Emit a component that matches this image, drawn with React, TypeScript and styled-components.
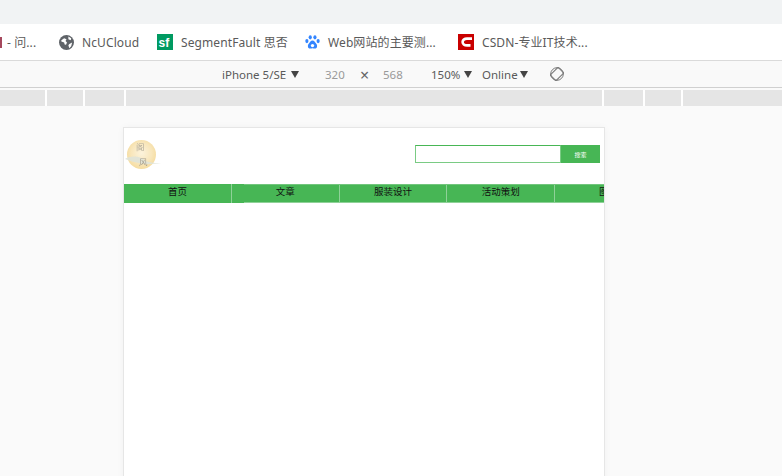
import React from 'react'
import styled, { createGlobalStyle } from 'styled-components'

const GlobalStyle = createGlobalStyle`
  html, body {
    margin: 0;
    padding: 0;
    height: 100%;
    overflow: hidden;
    background: #fafafa;
    font-family: "Liberation Sans", "Noto Sans CJK SC", sans-serif;
  }
`

const Page = styled.div`
  width: 782px;
  height: 476px;
  display: flex;
  flex-direction: column;
  overflow: hidden;
`

const TabStrip = styled.div`
  flex: none;
  height: 24px;
  background: #f1f3f4;
`

const BookmarkBar = styled.div`
  flex: none;
  height: 36px;
  background: #fff;
  border-bottom: 1px solid #dadada;
  display: flex;
  align-items: center;
  overflow: hidden;
  font-family: "Noto Sans", "Noto Sans CJK SC", sans-serif;
  font-size: 12px;
  letter-spacing: 0.1px;
  color: #5a5a5a;
`

const Bookmark = styled.div<{ $width: number }>`
  flex: none;
  width: ${p => p.$width}px;
  display: flex;
  align-items: center;
  gap: 8px;
  white-space: nowrap;
`

const CutIconEdge = styled.span`
  flex: none;
  width: 2px;
  height: 11px;
  margin-right: -3px;
  background: #a5475c;
`

const DeviceBar = styled.div`
  flex: none;
  height: 26px;
  background: #f9f9f9;
  border-bottom: 1px solid #d0d0d0;
  display: flex;
  align-items: center;
  padding-left: 222px;
  font-family: "Noto Sans", sans-serif;
  font-size: 11.5px;
  color: #5a5a5a;
`

const DeviceItem = styled.span<{ $width: number; $muted?: boolean }>`
  flex: none;
  width: ${p => p.$width}px;
  color: ${p => (p.$muted ? '#9a9a9a' : '#5a5a5a')};
  white-space: nowrap;
`

const Times = styled.span`
  flex: none;
  width: 23px;
  font-size: 16px;
  line-height: 16px;
  padding-top: 2px;
  color: #666;
`

const Caret = styled.span<{ $gap?: number }>`
  display: inline-block;
  margin-left: ${p => p.$gap ?? 5}px;
  width: 0;
  height: 0;
  border-left: 4px solid transparent;
  border-right: 4px solid transparent;
  border-top: 7px solid #444;
  vertical-align: 1px;
`

const Ruler = styled.div`
  flex: none;
  margin-top: 2px;
  height: 16px;
  display: flex;
  gap: 2px;
  background: #fff;
`

const RulerPart = styled.div<{ $width: number }>`
  flex: none;
  width: ${p => p.$width}px;
  background: #e5e5e5;
`

const Viewport = styled.div`
  flex: 1;
  min-height: 0;
  overflow: hidden;
  padding: 22px 0 0 124px;
`

const Device = styled.div`
  width: 480px;
  height: 400px;
  background: #fff;
  box-shadow: 0 0 0 1px #e6e6e6, 0 0 8px rgba(0, 0, 0, 0.05);
  overflow: hidden;
`

const Header = styled.div`
  height: 56px;
  display: flex;
  align-items: center;
  justify-content: space-between;
  padding-right: 4px;
`

const LogoMark = styled.svg`
  display: block;
  margin-bottom: 3px;
  filter: blur(0.5px);
`

const Search = styled.div`
  display: flex;
  height: 18px;
  margin-bottom: 4px;
`

const SearchInput = styled.div`
  width: 146px;
  box-sizing: border-box;
  border: 1px solid #7acb84;
  border-top-color: #47b655;
  background: #fff;
`

const SearchButton = styled.div`
  width: 39px;
  background: #47b655;
  color: #fff;
  font-size: 6px;
  display: flex;
  align-items: center;
  justify-content: center;
`

const Nav = styled.div`
  position: relative;
  display: flex;
  height: 19px;
  overflow: hidden;

  &::after {
    content: '';
    position: absolute;
    left: 120px;
    right: 0;
    top: 0;
    bottom: 0;
    border-top: 1px solid #72c67d;
    border-bottom: 1px solid #8fd198;
  }
`

const NavItem = styled.div`
  flex: none;
  width: 107.8px;
  box-sizing: border-box;
  height: 19px;
  background: #47b655;
  border-right: 1px solid #8fd198;
  text-align: center;
  font-size: 9.5px;
  line-height: 15px;
  color: #111;
`

const tabs = ['首页', '文章', '服装设计', '活动策划', '图片']

const GlobeIcon = () => (
  <svg width="15" height="15" viewBox="0 0 16 16">
    <circle cx="8" cy="8" r="8" fill="#5f6368" />
    <path d="M2.500 5.500l3-2 2.500 1-1 2 1.500 1.500-1 2.500-1.500-.5-.5-2-3-1zM10 1.500l3 2-.5 2-2.500-1zM11 9.500l3-1.500-1 4-2 2-1-3z" fill="#fff" />
  </svg>
)

const SfIcon = () => (
  <svg width="16" height="16" viewBox="0 0 16 16">
    <rect width="16" height="16" fill="#009a61" />
    <text x="1.5" y="12.5" fontFamily="Liberation Sans" fontWeight="700" fontSize="12" fill="#fff">sf</text>
  </svg>
)

const PawIcon = () => (
  <svg width="15" height="16" viewBox="0 0 16 16" fill="#3385ff">
    <ellipse cx="5.600" cy="3" rx="1.700" ry="2.300" />
    <ellipse cx="10.600" cy="3" rx="1.700" ry="2.300" />
    <ellipse cx="2" cy="7" rx="1.700" ry="2.200" />
    <ellipse cx="14" cy="7" rx="1.700" ry="2.200" />
    <path d="M8 6.500c-2 0-2.500 2-4 3.300C2.700 11 2.500 15 5.500 15c1 0 1.500-.4 2.500-.4s1.500.4 2.500.4c3 0 2.800-4 1.500-5.200C10.500 8.500 10 6.500 8 6.500z" />
    <circle cx="8" cy="11.800" r="1.800" fill="#fff" />
  </svg>
)

const CsdnIcon = () => (
  <svg width="16" height="16" viewBox="0 0 16 16">
    <rect width="16" height="16" fill="#c90000" />
    <path d="M14 4.600H9C6.300 4.600 4.600 6.200 4.600 8S6.300 11.400 9 11.400h3.500" fill="none" stroke="#fff" strokeWidth="2.600" />
  </svg>
)

const RotateIcon = () => (
  <svg width="14" height="14" viewBox="0 0 14 14" fill="none" stroke="#777" strokeWidth="1">
    <circle cx="7" cy="7" r="6.300" />
    <rect x="3" y="1.500" width="8" height="11" rx="0.500" transform="rotate(45 7 7)" />
  </svg>
)

const Logo = () => (
  <LogoMark width="38" height="31" viewBox="0 0 38 31">
    <defs>
      <radialGradient id="moon" cx="50%" cy="45%" r="55%">
        <stop offset="0%" stopColor="#fcf3dc" />
        <stop offset="65%" stopColor="#f8e6bb" />
        <stop offset="100%" stopColor="#f5dc9f" />
      </radialGradient>
    </defs>
    <circle cx="17.500" cy="15.500" r="14.500" fill="url(#moon)" />
    <path d="M1 20c5-3 11-3 16-1 3 1 5 4 8 4 4 1 8 1 12 1-8 1-16 2-22 0-5-1-9-2-14-4z" fill="#dfe3d8" opacity="0.9" />
    <text x="12" y="11" fontSize="8.500" fill="#b3ac9b">阁</text>
    <text x="15" y="26" fontSize="8.500" fill="#a9a291">风</text>
  </LogoMark>
)

export default function App() {
  return (
    <Page>
      <GlobalStyle />
      <TabStrip />
      <BookmarkBar>
        <Bookmark $width={59}>
          <CutIconEdge />
          <span>- 问...</span>
        </Bookmark>
        <Bookmark $width={98}>
          <GlobeIcon />
          NcUCloud
        </Bookmark>
        <Bookmark $width={148}>
          <SfIcon />
          SegmentFault 思否
        </Bookmark>
        <Bookmark $width={153}>
          <PawIcon />
          Web网站的主要测...
        </Bookmark>
        <Bookmark $width={160}>
          <CsdnIcon />
          CSDN-专业IT技术...
        </Bookmark>
      </BookmarkBar>
      <DeviceBar>
        <DeviceItem $width={103}>
          iPhone 5/SE
          <Caret />
        </DeviceItem>
        <DeviceItem $width={35} $muted>320</DeviceItem>
        <Times>×</Times>
        <DeviceItem $width={48} $muted>568</DeviceItem>
        <DeviceItem $width={51}>
          150%
          <Caret $gap={4} />
        </DeviceItem>
        <DeviceItem $width={68}>
          Online
          <Caret $gap={2} />
        </DeviceItem>
        <RotateIcon />
      </DeviceBar>
      <Ruler>
        <RulerPart $width={45} />
        <RulerPart $width={36} />
        <RulerPart $width={39} />
        <RulerPart $width={476} />
        <RulerPart $width={39} />
        <RulerPart $width={36} />
        <RulerPart $width={100} />
      </Ruler>
      <Viewport>
        <Device>
          <Header>
            <Logo />
            <Search>
              <SearchInput />
              <SearchButton>搜索</SearchButton>
            </Search>
          </Header>
          <Nav>
            {tabs.map(tab => (
              <NavItem key={tab}>{tab}</NavItem>
            ))}
          </Nav>
        </Device>
      </Viewport>
    </Page>
  )
}
